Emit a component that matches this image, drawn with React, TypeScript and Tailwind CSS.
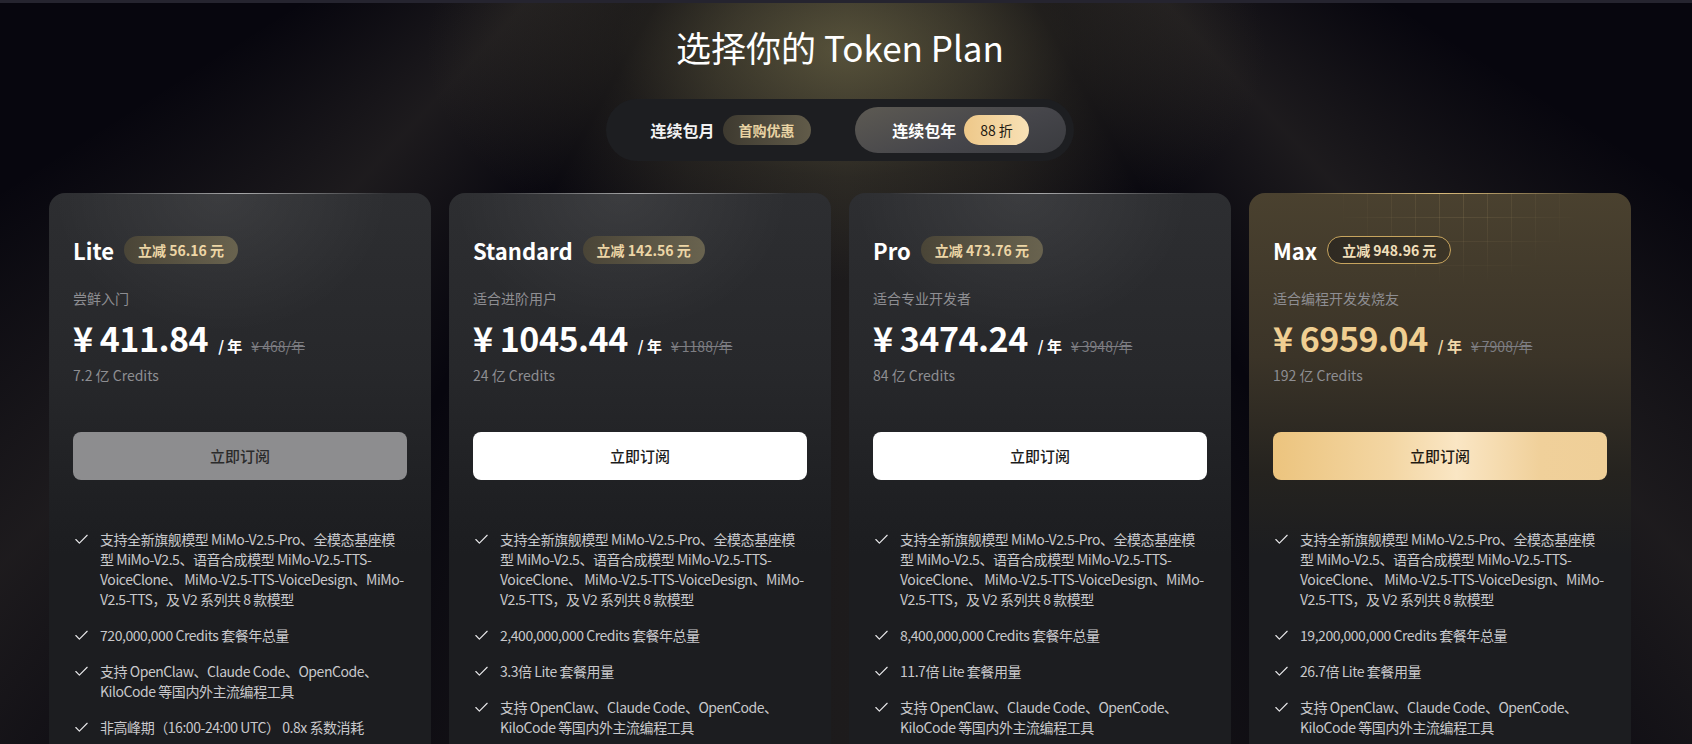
import { Check } from "lucide-react";

type Plan = {
  name: string;
  off: string;
  desc: string;
  price: string;
  old: string;
  credits: string;
  features: string[];
  variant: "lite" | "normal" | "max";
};

const MODELS =
  "支持全新旗舰模型 MiMo-V2.5-Pro、全模态基座模型 MiMo-V2.5、语音合成模型 MiMo-V2.5-TTS-VoiceClone、 MiMo-V2.5-TTS-VoiceDesign、MiMo-\u200BV2.5-TTS，及 V2 系列共 8 款模型";
const TOOLS = "支持 OpenClaw、Claude Code、OpenCode、KiloCode 等国内外主流编程工具";
const OFFPEAK = "非高峰期（16:00-24:00 UTC） 0.8x 系数消耗";

const plans: Plan[] = [
  {
    name: "Lite",
    off: "立减 56.16 元",
    desc: "尝鲜入门",
    price: "¥ 411.84",
    old: "¥ 468/年",
    credits: "7.2 亿 Credits",
    features: [MODELS, "720,000,000 Credits 套餐年总量", TOOLS, OFFPEAK],
    variant: "lite",
  },
  {
    name: "Standard",
    off: "立减 142.56 元",
    desc: "适合进阶用户",
    price: "¥ 1045.44",
    old: "¥ 1188/年",
    credits: "24 亿 Credits",
    features: [MODELS, "2,400,000,000 Credits 套餐年总量", "3.3倍 Lite 套餐用量", TOOLS],
    variant: "normal",
  },
  {
    name: "Pro",
    off: "立减 473.76 元",
    desc: "适合专业开发者",
    price: "¥ 3474.24",
    old: "¥ 3948/年",
    credits: "84 亿 Credits",
    features: [MODELS, "8,400,000,000 Credits 套餐年总量", "11.7倍 Lite 套餐用量", TOOLS],
    variant: "normal",
  },
  {
    name: "Max",
    off: "立减 948.96 元",
    desc: "适合编程开发发烧友",
    price: "¥ 6959.04",
    old: "¥ 7908/年",
    credits: "192 亿 Credits",
    features: [MODELS, "19,200,000,000 Credits 套餐年总量", "26.7倍 Lite 套餐用量", TOOLS],
    variant: "max",
  },
];

const PlanCard = ({ plan }: { plan: Plan }) => {
  const isMax = plan.variant === "max";
  return (
    <div
      className={
        "relative w-[382px] shrink-0 rounded-2xl px-6 pt-[43px] pb-10 overflow-hidden " +
        (isMax
          ? "bg-[linear-gradient(180deg,#4a412f_0%,#3b3428_28%,#25231f_48%,#1c1d20_62%)]"
          : "bg-[radial-gradient(ellipse_55%_30%_at_45%_0%,rgba(255,255,255,0.07),transparent_80%),linear-gradient(180deg,#2d2e31_0%,#27282b_30%,#1f2023_52%,#1c1d20_62%)]")
      }
    >
      {/* top edge highlight */}
      <div
        className={
          "absolute top-0 left-10 right-10 h-px " +
          (isMax
            ? "bg-[linear-gradient(90deg,transparent,#d8b978,transparent)]"
            : "bg-[linear-gradient(90deg,transparent,rgba(255,255,255,0.55),transparent)]")
        }
      />
      {isMax && (
        <div className="absolute top-0 left-[94px] w-[230px] h-[120px] bg-[linear-gradient(90deg,rgba(230,200,140,0.14)_1px,transparent_1px),linear-gradient(180deg,rgba(230,200,140,0.14)_1px,transparent_1px)] bg-[size:24px_24px] [mask-image:radial-gradient(ellipse_55%_80%_at_50%_0%,black,transparent)]" />
      )}

      <div className="relative">
        <div className="flex items-center gap-[10px] h-7">
          <span className="text-[22px] font-semibold text-white leading-none">{plan.name}</span>
          <span
            className={
              "h-7 rounded-full px-[14px] flex items-center text-[14px] font-semibold " +
              (isMax
                ? "border border-[#c7a45e] bg-[linear-gradient(90deg,#2f2a22,#3c3527)] text-[#f1dfba]"
                : "bg-[linear-gradient(90deg,#4a4537,#69634f)] text-[#edd6a6]")
            }
          >
            {plan.off}
          </span>
        </div>

        <div className="mt-[24px] text-[14px] leading-5 text-[#8e8e92]">{plan.desc}</div>

        <div className="mt-[7px] flex items-baseline h-[46px]">
          <span
            className={
              "text-[34px] font-semibold tracking-[-0.5px] leading-[46px] " +
              (isMax ? "text-[#f0cf92]" : "text-white")
            }
          >
            {plan.price}
          </span>
          <span className={"ml-[10px] text-[15px] font-semibold " + (isMax ? "text-[#f1d9aa]" : "text-white")}>
            / 年
          </span>
          <span className="ml-[9px] text-[14px] text-[#7d7d82] line-through">{plan.old}</span>
        </div>

        <div className="mt-[4px] text-[14px] leading-5 text-[#8e8e92]">{plan.credits}</div>

        <button
          className={
            "mt-[47px] w-full h-12 rounded-lg text-[15px] font-medium " +
            (plan.variant === "lite"
              ? "bg-[#8d8d8f] text-[#2b2b2b]"
              : isMax
              ? "bg-[linear-gradient(90deg,#ecc47e_0%,#f3d6a3_35%,#fae6c4_55%,#f0d09a_80%,#efcf98_100%)] text-[#1f1a12]"
              : "bg-white text-[#1b1b1b]")
          }
        >
          立即订阅
        </button>

        <ul className="mt-[49px] flex flex-col gap-4">
          {plan.features.map((f, i) => (
            <li key={i} className="flex gap-[10px] text-[14px] leading-5 tracking-[-0.45px] text-[#c8c8cb]">
              <Check size={17} strokeWidth={1.6} className="shrink-0 mt-[2px] text-[#e8e8ea]" />
              <span className="min-w-0 flex-1">{f}</span>
            </li>
          ))}
        </ul>
      </div>
    </div>
  );
};

export default function App() {
  return (
    <div className="relative h-[744px] overflow-hidden bg-[#07060e] font-['Noto_Sans_CJK_SC',sans-serif]">
      {/* light rays and glow */}
      <div className="absolute inset-0 bg-[conic-gradient(at_50%_-340px,transparent_122deg,rgba(225,210,165,0.10)_137deg,transparent_151deg,rgba(190,180,130,0.07)_163deg,rgba(190,180,130,0.12)_180deg,rgba(190,180,130,0.07)_197deg,transparent_209deg,rgba(225,210,165,0.10)_223deg,transparent_238deg)]" />
      <div className="absolute inset-0 bg-[radial-gradient(ellipse_420px_230px_at_50%_50px,rgba(125,118,78,0.6),rgba(90,85,60,0.25)_55%,transparent_100%)]" />

      <div className="relative">
        <div className="h-[3px] bg-[#25242f]" />
        <div className="pl-[49px] w-[1631px] flex flex-col items-center">
          <h1 className="mt-[22px] text-[35px] leading-[44px] text-white font-normal">选择你的 Token Plan</h1>

          <div className="mt-[30px] flex items-center gap-2 p-2 rounded-full bg-[#1d1e21]">
            <div className="w-[233px] h-[46px] flex items-center justify-center gap-2">
              <span className="text-[16px] font-semibold text-[#f2f2f2]">连续包月</span>
              <span className="h-[30px] px-4 rounded-full flex items-center text-[14px] font-semibold text-[#e9d3a3] bg-[linear-gradient(90deg,#3e3a30,#615b49)]">
                首购优惠
              </span>
            </div>
            <div className="w-[211px] h-[46px] rounded-full flex items-center justify-center gap-2 bg-[linear-gradient(160deg,#5d5a53_0%,#45454a_60%,#3a3b3f_100%)]">
              <span className="text-[16px] font-semibold text-white">连续包年</span>
              <span className="h-[30px] px-4 rounded-full flex items-center text-[14px] text-[#1e1a12] bg-[linear-gradient(90deg,#eec889,#f8e1b6)]">
                88 折
              </span>
            </div>
          </div>

          <div className="mt-8 flex gap-[18px] self-start">
            {plans.map((p) => (
              <PlanCard key={p.name} plan={p} />
            ))}
          </div>
        </div>
      </div>
    </div>
  );
}
